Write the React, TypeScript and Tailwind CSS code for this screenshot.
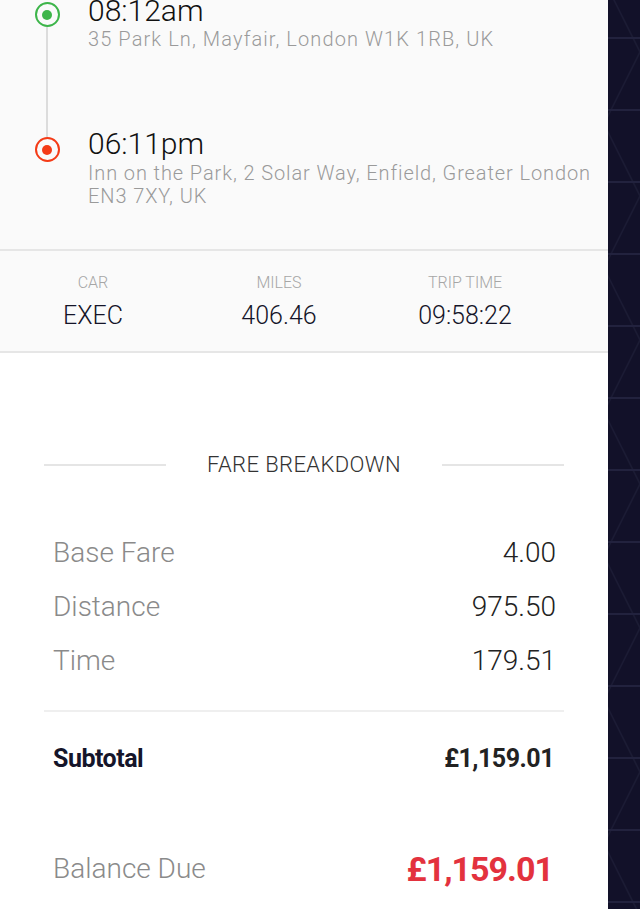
import React from 'react';

const light = { fontFamily: '"Roboto", "Liberation Sans", sans-serif' };

const stats = [
  { label: 'CAR', value: 'EXEC' },
  { label: 'MILES', value: '406.46' },
  { label: 'TRIP TIME', value: '09:58:22' },
];

const fares = [
  { label: 'Base Fare', value: '4.00' },
  { label: 'Distance', value: '975.50' },
  { label: 'Time', value: '179.51' },
];

const Dot = ({ color }: { color: string }) => (
  <div
    className="w-[25px] h-[25px] rounded-full border-[2.5px] flex items-center justify-center bg-[#fafafa]"
    style={{ borderColor: color }}
  >
    <div className="w-[10px] h-[10px] rounded-full" style={{ backgroundColor: color }} />
  </div>
);

// dark patterned strip on the right edge
const Pattern = () => (
  <svg width="100%" height="100%" xmlns="http://www.w3.org/2000/svg">
    <defs>
      <pattern id="grid" width="72" height="144" patternUnits="userSpaceOnUse" x="-4" y="-20">
        <path d="M0 0 L72 144 M72 0 L0 144" stroke="#1b1b34" strokeWidth="1.5" fill="none" />
        <path d="M0 58 L72 58 M0 130 L72 130" stroke="#22223e" strokeWidth="2" fill="none" />
      </pattern>
    </defs>
    <rect width="100%" height="100%" fill="#121129" />
    <rect width="100%" height="100%" fill="url(#grid)" />
  </svg>
);

export default function App() {
  return (
    <div className="flex w-[640px] h-[909px] overflow-hidden bg-white" style={light}>
      <div className="w-[608px] shrink-0 flex flex-col">
        {/* route */}
        <section className="bg-[#fafafa] flex pb-[41px]">
          <div className="w-[88px] shrink-0 flex flex-col items-center pt-[2px] pl-[6px]">
            <Dot color="#3db54a" />
            <div className="w-[2px] h-[110px] bg-[#dcdcdc]" />
            <Dot color="#f43b17" />
          </div>
          <div className="w-[515px] flex flex-col -mt-[4px]">
            <div className="text-[30px] leading-[30px] font-light text-[#111]">08:12am</div>
            <div className="mt-[2px] text-[20px] leading-[23px] font-light tracking-[1.1px] text-[#9a9a9a]">
              35 Park Ln, Mayfair, London W1K 1RB, UK
            </div>
            <div className="mt-[78px] text-[30px] leading-[30px] font-light text-[#111]">06:11pm</div>
            <div className="mt-[3px] text-[20px] leading-[23px] font-light tracking-[0.9px] text-[#9a9a9a]">
              Inn on the Park, 2 Solar Way, Enfield, Greater London EN3 7XY, UK
            </div>
          </div>
        </section>

        {/* stats */}
        <section className="bg-[#fafafa] border-y-2 border-[#e6e6e6] h-[104px] box-border">
          <div className="w-[558px] grid grid-cols-3 text-center pt-[22px]">
            {stats.map((s) => (
              <div key={s.label} className="flex flex-col items-center">
                <div className="text-[16px] leading-[20px] font-light text-[#a6a6a6]">{s.label}</div>
                <div className="mt-[8px] text-[25px] leading-[30px] font-light text-[#141428]">{s.value}</div>
              </div>
            ))}
          </div>
        </section>

        {/* fare breakdown */}
        <section className="flex flex-col pt-[100px]">
          <div className="flex items-center px-[44px] h-[24px]">
            <div className="flex-1 h-[2px] bg-[#e5e5e5]" />
            <div className="mx-[41px] text-[22px] leading-[24px] font-light tracking-[0.4px] text-[#333]">
              FARE BREAKDOWN
            </div>
            <div className="flex-1 h-[2px] bg-[#e5e5e5]" />
          </div>

          <div className="mt-[49px] flex flex-col">
            {fares.map((f) => (
              <div key={f.label} className="h-[54px] flex items-center justify-between pl-[53px] pr-[52px]">
                <span className="text-[28px] font-light text-[#8a8a8a]">{f.label}</span>
                <span className="text-[28px] font-light text-[#222]">{f.value}</span>
              </div>
            ))}
          </div>

          <div className="mt-[22px] mx-[44px] h-[2px] bg-[#efefef]" />

          <div className="mt-[20px] h-[54px] flex items-center justify-between pl-[53px] pr-[54px]">
            <span className="text-[25px] font-bold tracking-[-0.5px] text-[#15152a]">Subtotal</span>
            <span className="text-[25px] font-bold tracking-[-0.5px] text-[#222]">£1,159.01</span>
          </div>

          <div className="mt-[56px] h-[54px] flex items-center justify-between pl-[53px] pr-[55px]">
            <span className="text-[28px] font-light text-[#8a8a8a]">Balance Due</span>
            <span className="text-[34px] font-bold tracking-[-1px] text-[#e3323e]">£1,159.01</span>
          </div>
        </section>
      </div>
      <div className="flex-1 h-full">
        <Pattern />
      </div>
    </div>
  );
}
